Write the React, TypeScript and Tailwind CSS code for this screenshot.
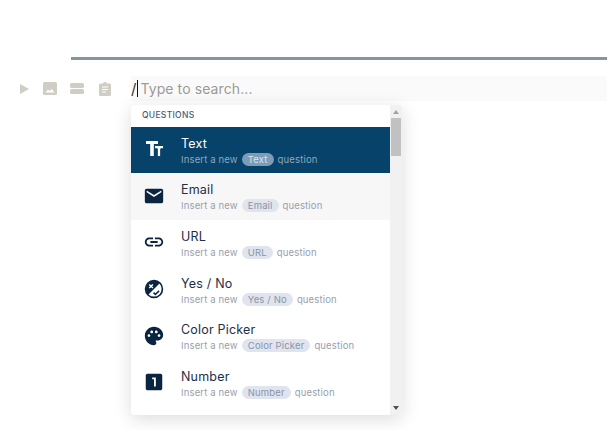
const questions = [
  { name: "Text", icon: "text" },
  { name: "Email", icon: "email" },
  { name: "URL", icon: "url" },
  { name: "Yes / No", icon: "yesno" },
  { name: "Color Picker", icon: "palette" },
  { name: "Number", icon: "number" },
];

function QuestionIcon({ icon, active }: { icon: string; active: boolean }) {
  const color = active ? "#ffffff" : "#0a2540";
  if (icon === "text") {
    return (
      <svg width="22" height="22" viewBox="0 0 22 22" fill={color}>
        <path d="M3 3h12v3H10.800v12H7.200V6H3z" />
        <path d="M11.500 7.500H20.500v3.300h-2.800V18.500h-3.400v-7.700h-2.800z" stroke="#07426a" strokeWidth="1" />
      </svg>
    );
  }
  if (icon === "email") {
    return (
      <svg width="22" height="22" viewBox="0 0 24 24" fill={color}>
        <path d="M20 4H4c-1.100 0-2 .9-2 2v12c0 1.100.9 2 2 2h16c1.100 0 2-.9 2-2V6c0-1.100-.9-2-2-2zm0 4-8 5-8-5V6l8 5 8-5v2z" />
      </svg>
    );
  }
  if (icon === "url") {
    return (
      <svg width="22" height="22" viewBox="0 0 24 24" fill={color}>
        <path d="M3.900 12c0-1.710 1.390-3.100 3.100-3.100h4V7H7c-2.760 0-5 2.240-5 5s2.240 5 5 5h4v-1.900H7c-1.710 0-3.100-1.390-3.100-3.100zM8 13h8v-2H8v2zm9-6h-4v1.900h4c1.710 0 3.100 1.390 3.100 3.100s-1.390 3.100-3.100 3.100h-4V17h4c2.760 0 5-2.240 5-5s-2.240-5-5-5z" />
      </svg>
    );
  }
  if (icon === "yesno") {
    return (
      <svg width="22" height="22" viewBox="0 0 24 24" fill="none">
        <circle cx="12" cy="12" r="9.200" stroke={color} strokeWidth="1.800" />
        <path d="M5.500 18.500A9.200 9.200 0 0 1 18.500 5.500z" fill={color} />
        <path d="M6.800 7l4 4M10.800 7l-4 4" stroke="#fff" strokeWidth="1.500" />
        <path d="M11.500 16l2 2 4-4" stroke={color} strokeWidth="1.700" />
      </svg>
    );
  }
  if (icon === "palette") {
    return (
      <svg width="22" height="22" viewBox="0 0 24 24" fill={color}>
        <path d="M12 2C6.490 2 2 6.490 2 12s4.490 10 10 10c1.380 0 2.500-1.120 2.500-2.500 0-.61-.23-1.200-.64-1.670-.08-.1-.13-.21-.13-.33 0-.28.22-.5.5-.5H16c3.310 0 6-2.690 6-6 0-4.960-4.490-9-10-9zm5.500 11c-.83 0-1.500-.67-1.500-1.500s.67-1.500 1.500-1.500 1.500.67 1.500 1.500-.67 1.500-1.500 1.500zm-3-4c-.83 0-1.500-.67-1.500-1.500S13.670 6 14.500 6s1.500.67 1.500 1.500S15.330 9 14.500 9zM5 11.500c0-.83.67-1.500 1.500-1.500s1.500.67 1.500 1.500S7.330 13 6.500 13 5 12.330 5 11.500zm6-4c0 .83-.67 1.500-1.500 1.500S8 8.330 8 7.500 8.670 6 9.500 6s1.500.67 1.500 1.500z" />
      </svg>
    );
  }
  return (
    <svg width="22" height="22" viewBox="0 0 24 24" fill={color}>
      <path fillRule="evenodd" d="M5 3h14c1.100 0 2 .9 2 2v14c0 1.100-.9 2-2 2H5c-1.100 0-2-.9-2-2V5c0-1.100.9-2 2-2zm9 14V7h-4v2h2v8h2z" />
    </svg>
  );
}

export default function App() {
  return (
    <div className="relative h-[430px] w-[607px] overflow-hidden bg-white font-['Inter','Open_Sans',sans-serif]">
      <div className="pl-[71px] pt-[57px]">
        <div className="h-[3px] bg-[#84979f]" />
      </div>

      <div className="mt-4 flex h-[25px] items-center">
        <div className="flex w-[131px] items-center pl-[20px]">
          <svg width="9" height="10" viewBox="0 0 9 10" fill="#cfcdc4" className="mr-[14px]">
            <path d="M0 0l9 5-9 5z" />
          </svg>
          <svg width="14" height="13" viewBox="0 0 14 13" className="mr-[13px]">
            <rect width="14" height="13" rx="1.500" fill="#cfcdc4" />
            <path d="M2.500 10.500l2.500-3 1.700 1.800 1.800-2.300 3 3.500z" fill="#fff" />
          </svg>
          <div className="mr-[15px] flex flex-col gap-px">
            <span className="h-[5px] w-[14px] rounded-[1.500px] bg-[#cfcdc4]" />
            <span className="h-[5px] w-[14px] rounded-[1.500px] bg-[#cfcdc4]" />
          </div>
          <svg width="12" height="14" viewBox="0 0 12 14" fill="#cfcdc4">
            <path d="M1.500 1.500H4a2 1.500 0 0 1 4 0h2.500A1.500 1.500 0 0 1 12 3v9.500a1.500 1.500 0 0 1-1.500 1.500h-9A1.500 1.500 0 0 1 0 12.500V3a1.500 1.500 0 0 1 1.500-1.500z" />
            <path d="M3 5h6M3 7.500h6M3 10h4" stroke="#fff" strokeWidth="1" />
          </svg>
        </div>
        <div className="flex h-full flex-1 items-center bg-[#fafafa]">
          <span className="text-[15px] leading-none text-[#333]">/</span>
          <span className="ml-[1px] mr-[2px] h-[17px] w-px bg-[#111]" />
          <span className="text-[14px] tracking-[0.1px] text-[#9a9a96]">Type to search...</span>
        </div>
      </div>

      <div className="absolute left-[131px] top-[105px] flex h-[310px] w-[271px] overflow-hidden rounded-[4px] bg-white shadow-[0_4px_18px_rgba(0,0,0,0.14)]">
        <div className="w-[259px]">
          <div className="flex h-[21.500px] items-center pl-[11px] text-[8.500px] font-medium tracking-[0.3px] text-[#4a5a75]">
            QUESTIONS
          </div>
          {questions.map((q, i) => {
            const active = i === 0;
            return (
              <div
                key={q.name}
                className={`flex h-[46.600px] items-center pl-[12px] ${active ? "bg-[#07426a]" : i === 1 ? "bg-[#f7f7f7]" : "bg-white"}`}
              >
                <div className="-mt-[1px]">
                  <QuestionIcon icon={q.icon} active={active} />
                </div>
                <div className="ml-[16px] pt-[2px]">
                  <div className={`text-[12.500px] leading-[16px] tracking-[0.2px] ${active ? "text-white" : "text-[#1e3048]"}`}>
                    {q.name}
                  </div>
                  <div className={`mt-[1px] flex items-center text-[9.500px] leading-[13px] tracking-[0.15px] ${active ? "text-[#8fa8bc]" : "text-[#97a0ad]"}`}>
                    Insert a new
                    <span className={`mx-[4px] rounded-full px-[6px] ${active ? "bg-[#7d9cb8] text-[#dbe4ec]" : "bg-[#dfe4ef] text-[#8a94a5]"}`}>
                      {q.name}
                    </span>
                    question
                  </div>
                </div>
              </div>
            );
          })}
        </div>
        <div className="relative w-3 bg-[#f1f1f1]">
          <span className="absolute left-[3px] top-[5px] h-0 w-0 border-x-[3px] border-b-[4px] border-x-transparent border-b-[#a3a3a3]" />
          <div className="absolute left-[1px] top-[13px] h-[38px] w-[10px] bg-[#c1c1c1]" />
          <span className="absolute bottom-[5px] left-[3px] h-0 w-0 border-x-[3px] border-t-[4px] border-x-transparent border-t-[#505050]" />
        </div>
      </div>
    </div>
  );
}
